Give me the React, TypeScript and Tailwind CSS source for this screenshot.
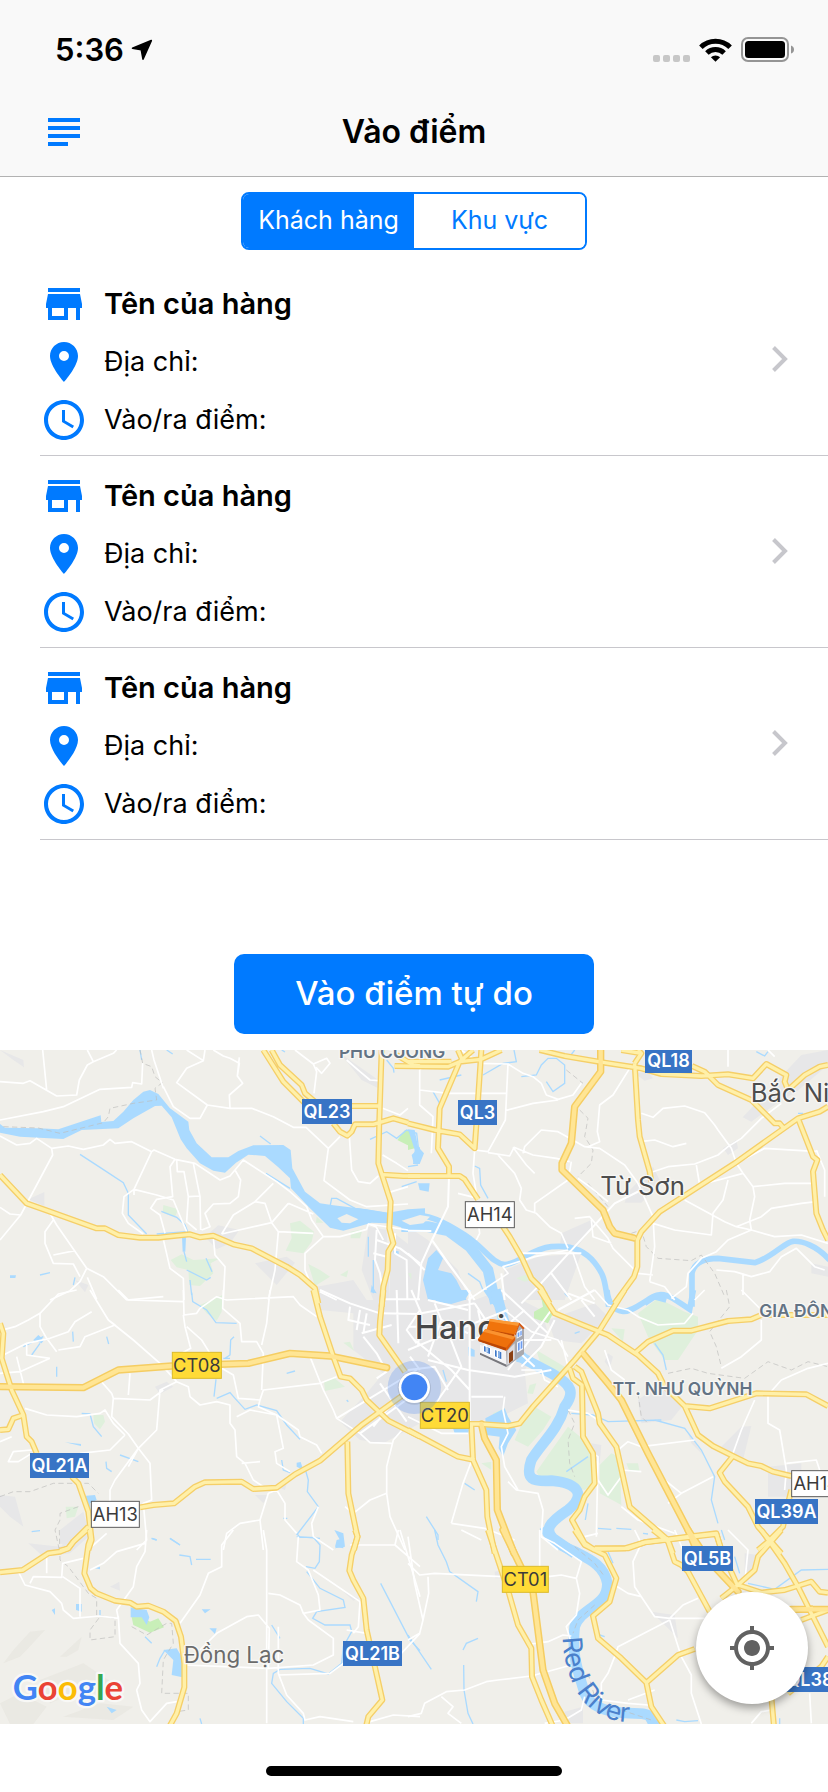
import { useState } from "react";
import { MdSubject, MdStore, MdLocationOn, MdAccessTime, MdMyLocation } from "react-icons/md";

/* ---------- Map data: six sheets, each with its own origin ---------- */

type Sheet = {
  x: number;
  y: number;
  urban?: string;
  green?: string;
  park?: string;
  lake?: string;
  river?: string;
  river2?: string;
  stream?: string;
  minor?: string;
  street?: string;
  border?: string;
  road?: string;
  highway?: string;
};

const SHEETS: Sheet[] = [
  {
    x: 0,
    y: 0,
    urban:
      "M85 478L133 456 133 498Z M0 30L70 60 72 82 40 60Z M615 590L655 556 718 570 690 610 650 628Z M765 670L860 650 885 668 830 735Z M1105 560L1160 570 1170 780 1120 780 1085 690Z M1170 570L1260 640 1260 780 1170 780Z M950 740L1060 720 1100 780 950 780Z M1020 40L1135 120 1135 145 1085 120Z M225 720L265 735 255 757Z",
    green:
      "M490 495L535 508 525 530 488 518Z M870 550L900 542 942 575 935 605 910 640 857 632 875 595Z M512 660L545 643 580 660 660 655 632 670 640 700 600 738 568 735 565 690 530 682Z M925 672L960 690 990 710 945 738Z M1052 575L1088 568 1080 595 1052 595Z M1020 705L1045 690 1040 712Z M950 530L970 548 948 548Z",
    park: "M1192 300L1215 270 1240 275 1254 325 1222 315Z",
    lake: "M0 252L15 263 115 265 175 268 302 226 304 246 340 243 370 215 400 180 430 155 450 150 475 162 510 205 565 245 568 270 590 310 635 352 685 352 715 333 760 316 850 315 872 330 877 385 915 455 960 490 1000 496 1100 508 1165 518 1224 508 1275 505 1275 548 1224 568 1160 550 1115 548 1030 572 990 563 930 505 873 445 870 415 835 382 795 348 745 344 708 368 675 398 640 392 600 370 560 325 542 298 515 232 485 197 465 198 400 235 355 265 245 270 190 297 60 290 0 278Z M1235 345L1260 320 1260 370 1240 365Z M1115 735L1130 760 1112 757Z M546 590L558 592 556 635 548 635Z M30 706L48 706 46 714 30 714Z M1180 632L1196 634 1196 648 1182 642Z",
    stream:
      "M240 343L300 382 370 428 385 460 385 525 440 582 M470 582L560 575 M484 514L530 532 555 555 565 580 M780 288L812 312 M798 400L870 445 M990 500L995 475 1010 475 1065 505 1160 520 M1110 298L1160 275 1190 295 1220 270 1250 280 1256 330 M1160 60L1180 85 1182 98 M1105 590L1105 650 M1120 660L1120 760 M552 635L560 665 M560 690L620 720 632 712 M618 655L636 695 M570 720L575 765 M120 705L150 698 M225 712L220 735 M420 30L425 60 M500 30L518 42 M1205 440L1250 425 M845 30L855 36",
    minor:
      "M0 125L70 130 90 122 170 168 230 165 238 120 262 75 280 65 M128 30L140 150 M280 65L262 30 M280 65L340 40 350 30 M0 240L130 215 190 200 300 148 395 142 398 128 425 132 428 70 M490 140L520 200 570 235 600 235 622 195 690 205 755 205 820 230 880 262 920 262 M455 30L462 60 490 145 M622 195L530 128 560 85 610 62 615 30 M610 62L560 30 M640 30L670 48 690 55 718 70 712 108 728 130 688 165 690 205 M718 52L712 108 M885 30L940 72 950 95 942 160 M940 72L980 55 990 70 965 100 948 82 M0 288L50 315 90 310 110 295 155 325 205 318 250 328 310 315 330 298 345 310 395 305 455 335 462 330 525 358 585 370 660 420 690 408 730 360 830 425 870 455 920 500 935 540 970 590 1020 590 1100 568 1105 552 1224 570 M155 325L158 345 62 525 0 600 M0 502L30 522 62 525 M455 335L402 448 402 465 M402 448L470 465 520 480 545 540 560 575 M402 448L372 470 367 520 385 550 430 582 M525 358L510 380 518 470 470 478 452 505 480 525 495 580 M530 358L532 395 552 395 565 470 600 468 M580 370L600 470 602 570 M565 470L560 545 590 570 M705 390L722 420 715 470 690 490 640 492 615 520 630 560 605 570 M665 582L700 525 765 485 820 430 M665 582L815 548 865 490 M765 485L795 490 815 548 835 575 940 580 M865 490L940 522 M835 575L825 690 805 780 M1105 552L1128 560 1150 600 M918 262L985 325 972 422 1050 480 1100 500 1224 492 M1048 290L1055 390 1075 425 1110 430 1135 408 M985 325L1020 290 M1148 345L1190 370 1224 392 M1165 458L1224 440 M1040 60L1080 95 1110 120 1135 122 M1148 205L1200 225 1224 205 M490 598L510 685 550 715 552 780 M640 592L645 645 675 680 670 780 M150 520L170 555 260 685 240 725 210 752 150 780 M160 540L135 575 135 610 160 670 220 672 240 710 M160 645L225 632 M260 685L310 710 380 780 M262 712L290 778 M970 590L915 640 915 690 935 740 M960 755L1010 780 M380 780L490 770",
    street: "M1130 570L1125 660 1140 700 1150 770 M1130 600L1200 625 1260 670 M1185 580L1185 640 1220 660 1222 780 M1120 640L1160 650",
    border: "M10 260L115 264 180 280 310 248 325 230 330 205 400 190 470 180 465 145 487 128 465 110 455 80 428 70 420 30",
    road: "M0 405L80 490 150 515 290 565 315 565 355 585 420 593 475 593 500 590 570 583 600 592 640 587 700 613 755 625 860 680 900 705 945 745 955 790 M790 30L850 125 915 190 M815 30L840 75 905 135 915 160 960 198 1140 198 M1000 250L1020 275 1042 287 1055 275 1065 253 1120 253 1180 235 1224 248 M1145 30L1138 240 1135 370 1172 485 1168 565 1180 610 1165 635 1163 690 1150 740 1145 800 M1150 404L1210 408 1260 408 M1190 45L1240 75 1260 78",
  },
  {
    x: 1224,
    y: 0,
    urban:
      "M1004 232L1180 45 1260 30 1260 75 1160 160 1120 180 1030 245Z M945 325L985 300 990 325 960 345Z M660 455L735 380 760 430 700 488 650 488Z M460 580L550 540 560 555 500 630 455 625Z M290 690L390 650 520 640 470 780 280 780Z M0 560L60 600 150 690 180 780 0 780Z M1210 670L1260 680 1260 710 1210 700Z M680 100L720 95 735 115 710 122Z",
    green: "M325 715L350 705 390 715 350 725Z M0 700L10 700 10 720Z",
    park: "M0 270L10 272 20 325 0 330Z M400 740L420 760 400 780Z",
    lake: "M60 655L85 630 105 655 90 690 130 700 145 720 175 780 60 780 45 720Z M30 430L65 430 62 455 35 450Z M0 268L20 270 30 320 48 340 35 372 15 372 20 330Z",
    river: "M-8 524C60 520 110 546 170 585S250 668 290 674C330 672 370 626 430 620S530 630 560 668S590 720 602 800 M710 790L740 770 775 780 M852 800L852 700C858 668 890 655 930 655L1040 668C1090 655 1130 606 1155 604S1225 615 1265 660",
    river2: "M-20 560L60 560 120 572 185 620 240 690 262 790",
    stream:
      "M75 155L95 190 M95 120L160 105 M225 105L285 70 325 65 318 30 M340 110L385 105 400 75 420 55 445 55 470 75 470 130 435 155 415 125 M200 378L215 385 218 435 240 475 M180 700L215 725 225 750 M1045 35L1070 48 1080 35 M500 30L485 50 M0 380L30 375 M1170 220L1185 220",
    minor:
      "M160 30L215 70 300 72 345 100 375 110 400 130 415 165 450 178 495 165 520 130 M300 72L292 240 265 290 240 335 200 330 M292 212L375 190 450 180 M35 150L120 160 295 160 M35 90L35 195 75 230 70 340 M60 30L55 70 35 90 M665 85L615 165 575 195 568 275 575 305 540 320 M700 220L735 232 765 205 830 198 890 218 920 255 930 270 970 325 M240 338L305 348 318 322 375 345 445 355 485 365 M315 322L355 375 380 400 M345 340L350 320 400 270 450 275 485 295 530 320 575 325 650 375 690 430 735 530 740 620 725 725 M270 345L320 400 340 445 335 480 355 510 385 520 425 560 460 580 480 625 M480 420L380 490 380 520 M490 365L485 395 M510 415L545 440 600 485 M150 460L210 475 M200 330L195 400 205 460 M205 500L215 580 205 600 M970 325L985 370 1005 400 1035 440 1040 470 1025 540 1030 570 1100 590 1180 585 1260 610 M985 370L1070 325 1230 335 M1035 440L1130 430 1215 430 M960 420L945 480 915 520 910 585 800 570 735 550 M865 375L875 435 1005 400 M830 480L950 545 985 560 1030 570 960 600 925 635 880 655 840 700 835 740 790 775 M985 560L1060 530 1090 505 1180 490 1225 485 M735 395L780 380 860 372 930 345 960 320 1000 295 1060 235 1120 190 M695 305L740 300 795 320 835 310 M500 535L545 530 600 595 615 625 690 700 M550 540L555 590 610 610 M495 640L530 740 560 780 M690 700L735 705 M925 690L980 695 1030 710 1085 695 1120 650 1165 625 1220 680 1250 690 M1005 700L1005 765 M725 725L770 740 800 780 M1225 330L1250 390 1250 470 M180 780L300 700 285 680 380 650 480 630 M1080 30L1100 50 M960 30L960 80",
    street:
      "M0 572L70 573 M72 600L120 500 123 410 M72 600L40 670 30 780 M72 600L120 670 180 750 M0 640L50 690 M500 620L390 740 340 790 M500 620L620 490 700 450 M72 600L200 780 M340 640L520 640 M280 700L290 780 M430 700L490 780",
    border: "M475 90L525 130 M515 210L540 235 530 290 555 330 550 370 510 410 M540 430L600 500 M670 580L700 570 715 620 750 655 850 662 880 645 920 700 950 770",
    road: "M-40 78L120 80 155 65 220 58 280 30 M0 65L130 65 M195 30L155 65 95 205 90 325 123 380 123 410 M220 30L205 255 200 325 155 283 80 270 0 250 M150 30L165 65 M0 408L155 408 170 418 210 478 M285 560L305 590 340 650 370 715 400 745 425 790 M395 30L470 48 590 68 700 85 760 102 880 108 960 103 1035 115 1075 72 1135 105 1130 125 1140 150 M1140 150L1190 105 1235 80 1260 75 M852 78L890 95 930 135 1030 180 1080 230 1100 250 1115 250 1125 262 M690 30L700 40 680 70 M640 30L700 40 M680 70L690 240 695 290 725 395 730 425 M1260 200L1235 215 1170 235 980 370 755 515 700 575 688 600 688 680 678 710 620 790 M1170 235L1215 350 1228 360 1215 395 1225 520 1245 570 1260 600",
    highway: "M578 30L578 95 500 200 490 310 462 370 462 390 585 510 605 560 620 580 678 594",
  },
  {
    x: 0,
    y: 750,
    urban:
      "M960 30L1260 30 1260 400 1150 460 1080 450 1020 395 1100 310 1150 250 1060 180 1060 70 960 60Z M465 290L500 275 520 290 480 312Z M180 760L180 720 250 665 265 720 220 780Z M765 615L805 615 790 640Z M0 615L45 620 70 710 30 680 0 650Z M830 590L860 580 855 600Z",
    green:
      "M600 45L668 15 665 65 650 92 620 70Z M280 375L310 375 315 395 300 418 282 400Z M197 650L235 650 225 680 200 685Z M972 275L1000 262 1035 290 975 303Z M1030 158L1050 155 1062 182Z",
    lake: "M100 150L115 135 132 150 125 160 Z M250 618L285 615 290 630 270 640 272 670Z M890 518L902 516 910 540 890 530Z M1010 750L1030 745 1030 775 1005 770Z M195 457L243 462 243 468Z",
    stream:
      "M575 8L578 35 620 60 648 98 710 100 M70 170L130 140 M95 195L120 160 M218 125L220 155 M170 230L170 260 M702 140L692 150 690 195 675 205 M670 205L690 205 M648 268L642 320 M650 325L690 308 705 325 735 358 770 345 830 362 860 405 900 448 M860 250L885 243 M245 370L270 372 280 410 305 440 M318 515L320 535 335 545 M360 495L415 515 M845 510L850 540 870 548 M915 535L925 570 922 605 955 650 890 735 M890 740L960 745 M455 745L470 750 M510 745L540 765 M850 685L862 685 M95 725L120 722 M320 140L326 162 M1040 330L1045 335",
    minor:
      "M0 122L45 110 85 90 120 70 175 12 230 0 M120 70L120 110 140 145 170 185 M0 200L80 160 150 145 205 125 225 95 275 65 M80 160L80 195 150 205 M270 0L325 90 400 150 480 220 530 275 M325 90L345 105 255 140 240 170 175 180 M50 200L75 300 M0 250L60 245 150 205 M550 0L552 75 590 70 600 55 650 20 680 30 880 20 900 45 950 80 M550 75L555 110 572 175 545 190 M560 110L605 150 630 190 M355 0L385 30 550 35 M670 0L668 55 720 100 725 155 770 155 790 190 785 300 M810 0L800 100 785 165 M530 275L565 290 570 320 600 345 650 335 690 345 690 400 705 420 710 500 735 520 760 570 805 600 M530 275L480 300 470 420 415 475 450 520 455 630 430 640 440 750 410 780 M490 300L450 330 340 325 335 310 300 270 M340 325L335 380 385 432 415 475 M75 355L140 375 230 380 300 370 315 360 340 400 375 435 M375 435L330 480 240 490 M385 315L390 250 M415 475L345 570 330 600 330 640 M385 530L415 475 M0 455L35 440 M95 480L40 485 25 515 55 515 95 490 M665 235L700 255 715 325 780 330 790 300 960 280 1010 260 M780 330L775 350 830 375 895 420 900 440 950 465 965 490 M710 380L750 360 830 375 850 475 825 485 830 520 870 545 M725 520L780 515 M930 200L970 300 1000 360 1010 385 1080 430 1110 458 1175 460 M1215 410L1180 450 1160 530 1160 610 1170 680 1215 780 M1160 610L1110 630 1060 670 M1060 670L1035 650 M805 610L830 600 855 640 855 690 890 730 M805 610L780 690 720 700 680 730 670 780 M780 690L790 780 M955 650L935 700 940 740 1000 780",
    street:
      "M960 0L1050 40 1140 70 1260 72 M1155 28L1260 28 M1190 0L1195 160 M1050 50L1045 90 1110 105 M1080 60L1070 120 M1100 70L1090 130 M1010 385L1250 240 M1080 430L1260 300 M1090 140L1130 190 1160 245 1130 265 M1140 280L1220 395 M1200 310L1120 410 M1260 60L1220 120 1250 160 M1085 130L1175 105 M1230 200L1260 240",
    border: "M0 620L40 605 90 605 160 580 265 580 295 610 M235 650L180 670 180 690 165 720 178 780",
    road: "M0 100L10 130 5 205 35 300 70 375 80 440 95 455 110 490 M0 420L25 418 40 385 70 375 M215 560L235 580 265 665 275 750 265 780 M265 710L220 755 205 775 180 782 M420 652L460 645 522 640 585 590 615 577 725 575 760 597 830 593 885 553 960 512 1085 405 1140 365 1205 318 M940 0L960 80 1000 200 1022 260 1050 265 1085 300 1100 330 1165 392 1260 440 M1150 0L1140 95 1138 135 1215 245 M1042 455L1045 610 1072 740 1062 780",
    highway: "M0 290L250 293 355 240 515 228 745 220 870 190 990 198 1160 233",
  },
  {
    x: 1224,
    y: 750,
    urban:
      "M0 30L200 30 280 0 400 60 420 130 350 240 360 340 280 380 180 400 0 400Z M420 90L560 40 600 80 520 160 440 150Z M690 330L770 270 830 340 790 390 700 400Z M940 470L1000 410 1030 408 1005 510 960 480Z M600 190L615 200 605 235 590 215Z M1080 530L1180 520 1180 620 1080 620Z M550 460L580 465 575 520 550 500Z M840 430L890 500 900 510 850 460Z",
    green:
      "M385 180L470 230 470 270 400 230Z M355 370L380 350 430 380 405 420 360 470 320 450Z M480 410L540 460 555 510 560 580 530 600 400 570 385 545Z M575 525L610 490 635 500 640 645 575 610Z M690 70L750 25 830 65 870 80 870 120 810 210 770 210 720 140Z M365 285L385 280 375 312 358 310Z M610 115L650 118 645 155Z M655 520L690 520 695 545 665 545Z M255 370L290 355 300 390 260 395Z M220 520L250 515 250 540Z",
    park: "M378 65L405 50 400 25 420 35 435 70 420 100 378 85Z M232 412L270 415 270 435 235 435Z",
    lake: "M62 0L190 0 170 30 130 42 85 35Z M225 0L250 0 290 50 290 85 260 50Z M232 385L290 355 300 380 325 420 300 460 285 500 272 475 275 440 235 435Z M180 170L200 180 200 200 182 198Z M135 415L185 418 180 430 140 430Z M320 185L355 195 370 225 325 215Z",
    river: "M597 0C600 40 620 62 645 64S700 40 735 20S800 30 845 58L856 0",
    river2:
      "M262 0L285 85 315 180 350 208 430 250C495 285 500 310 470 350C450 420 400 460 370 510C350 570 375 575 430 572C520 580 530 620 480 660C420 700 410 720 435 745L500 790",
    stream:
      "M740 160L765 195 775 240 M740 390L830 415 880 480 920 560 910 630 930 700 M475 545L540 500 M490 370L555 375 600 395 760 390 M540 640L532 690 M570 715L610 718 M625 715L670 718 M55 680L90 735 90 750 M170 580L200 600 M500 130L515 125 M470 10L480 20 M105 240L115 275",
    minor:
      "M560 0L600 45 660 60 690 80 750 105 830 100 855 70 M890 0L860 30 M290 60L370 125 450 150 480 200 M130 700L165 580 190 515 M130 700L230 715 320 750 M290 320L285 360 300 430 280 470 290 530 330 600 M300 575L325 600 390 610 405 660 400 740 450 780 M460 150L480 230 M590 180L610 240 650 270 M640 0L600 80 M700 470L660 455 630 480 M700 470L860 450 M700 470L770 570 820 610 915 560 M820 610L780 640 M1040 330L1000 420 975 490 M1080 315L1080 400 1115 420 1135 540 1130 600 M1120 270L1080 315 M1060 90L1060 150 1000 200 940 235 M1120 270L1200 235 1260 220 M1135 520L1225 510 1235 540 M555 490L570 500 565 740 M570 570L600 615 640 560 M640 650L690 690 800 730 M640 540L700 545 M480 360L540 370 570 390 M1000 0L1060 60 M340 240L400 240 410 270 450 290 M0 380L100 430 180 430",
    street:
      "M10 0L40 70 30 170 M80 40L100 90 60 200 M40 70L200 40 M200 40L240 100 380 230 M0 180L120 130 300 60 M60 210L180 240 320 260 430 240 M185 0L185 400 M125 140L160 230 90 330 40 380 M190 320L285 320 M20 150L130 240 185 300 M290 80L330 150 430 150 M300 240L430 60 M280 0L420 130 M210 60L240 200 M350 60L280 120 190 150 M100 90L180 130 M0 240L80 230 120 300 M0 110L70 110 M60 30L180 60 M340 230L400 170 440 90 M520 30L560 80 M450 60L560 0 M560 40L480 10",
    border: "M955 0L965 50 905 125 925 170 940 230 M780 250L850 235 900 250 1010 265 1080 215 1150 240 1200 215 1260 230 M480 360L500 400 480 450 485 520 500 560 M690 310L700 380 720 400",
    road: "M395 0L440 70 525 105 600 135 690 195 750 250 770 290 830 348 905 355 1045 310 1195 313 1260 348 M680 190L720 155 795 122 850 122 960 93 1030 88 1060 75 1260 75 M650 0L575 120 500 210 375 350 335 400 300 408 215 402 185 402 M485 235L495 265 522 285 525 440 555 490 560 580 530 620 515 660 492 690 530 760 560 780 M500 230L520 245 570 370 575 400 625 470 665 650 780 750 795 790 M0 420L150 500 200 510 M190 402L195 510 235 600 238 680 260 790 M560 775L650 775 710 757 840 740 925 730 940 780 M830 348L870 435 915 468 975 498 1020 520 1060 528 1095 545 1150 558 M975 498L935 548 950 575 1020 650 1050 710 1120 790 M1150 600L1140 640 1125 710 1080 755 1050 780",
    highway: "M525 190L600 280 640 330 720 490 840 720 870 790 M220 402L230 445 265 510 268 660 318 790",
  },
  {
    x: 0,
    y: 1470,
    urban: "M85 40L180 50 255 0 265 20 210 70 130 80Z M1030 185L1075 205 1060 212Z M330 170L358 155 360 182Z",
    park: "M395 262L410 248 450 275 475 265 492 292 450 308 400 285Z",
    lake: "M392 232L440 240 448 262 440 285 425 262 392 262Z M490 360L530 355 545 380 547 442 515 435 520 390Z M228 222L245 222 245 245 228 240Z M605 238L632 238 615 250Z M628 295L650 295 645 312Z M1003 0L1030 10 1035 50 1005 55 1020 30Z M320 530L350 540 335 550Z M155 240L165 235 165 255Z M285 115L300 110 300 118Z",
    stream:
      "M510 25L540 45 M538 75L570 80 575 105 M588 88L632 88 M890 10L900 22 940 22 960 45 958 95 945 115 918 110 M920 125L960 175 1030 210 1035 232 950 245 938 265 975 285 1050 285 1055 305 1030 350 1025 400 985 432 930 415 840 418 820 430 815 460 860 515 910 565 910 582 M815 285L840 325 M1142 160L1230 330 1260 362 M435 320L455 340 M300 240L300 260 M600 565L605 582 M470 410L480 385 495 360 M455 25L470 30",
    minor:
      "M440 0L435 65 410 110 400 170 350 240 355 265 300 258 220 265 190 240 185 220 150 185 75 165 55 125 M90 160L100 140 185 142 188 100 250 85 M188 140L240 175 240 260 M140 80L140 130 M270 120L310 100 350 65 435 40 M355 260L360 340 415 400 420 460 410 480 425 540 450 575 500 520 530 515 M275 50L320 10 M700 0L665 45 665 110 625 130 600 195 540 280 M790 0L800 60 800 580 M805 190L840 195 900 225 910 250 960 240 955 195 925 120 890 95 895 20 M600 360L650 310 740 260 775 255 808 295 805 415 M910 250L925 270 1000 325 1000 375 940 405 805 415 555 405 M835 290L835 430 860 495 910 550 915 570 960 560 1060 575 M835 435L990 430 1030 400 M940 120L1080 215 1075 290 1060 310 M1200 0L1230 100 1260 200 M1185 45L1260 110 M1195 0L1185 45 1050 45 M1100 310L1040 300 M1110 575L1180 555 1260 560 M1195 380L1260 310",
    border:
      "M178 0L180 90 205 110 265 190 290 205 290 255 345 265 345 320 270 330 270 300 300 260 M395 290L440 315 500 280 515 280 520 340 490 390 485 490 565 490 565 540 530 545",
    road: "M0 127L68 120 145 70 180 65 205 55 220 35 260 0 M268 0L272 25 265 45 253 130 272 175 290 190 345 212 390 218 410 230 445 227 490 245 527 273 543 320 553 400 553 472 530 550 508 590 M1065 0L1073 20 1055 75 1048 122 1060 150 1090 205 1100 300 1128 425 1147 510 1105 560 1098 590",
  },
  {
    x: 1224,
    y: 1470,
    urban: "M730 245L800 255 810 325 780 295Z M1010 70L1050 75 1045 130 1010 160Z M260 125L285 120 285 145 262 145Z M470 545L525 530 525 580 470 580Z",
    river2: "M410 -10C430 40 470 50 510 70S590 110 598 160C600 230 520 230 500 290C490 380 510 420 530 490C550 540 620 550 680 550S720 565 745 590",
    stream:
      "M80 0L90 45 115 95 125 125 210 185 205 215 M0 315L70 418 M165 360L175 340 210 325 M167 405L168 480 180 550 195 582 M805 570L830 575 870 572 M1020 160L1100 178 1180 120 1260 118 M980 80L995 130 M1115 565L1115 582 M600 65L615 100 M705 10L720 12 M575 315L590 320 M940 0L950 30",
    minor:
      "M0 100L35 135 80 130 280 140 M60 140L62 190 45 270 35 310 0 330 M0 20L20 160 45 270 M420 140L460 135 505 145 520 95 440 40 400 20 M395 0L395 130 M505 145L515 190 505 255 475 290 490 340 M370 342L420 335 465 315 490 318 M370 438L270 450 235 455 170 480 115 485 50 520 40 550 0 560 M100 500L135 530 120 550 160 580 M370 438L490 405 M620 165L660 190 700 200 740 260 785 265 890 265 M785 270L820 380 850 435 850 490 880 582 M785 270L630 350 620 380 600 430 580 460 580 510 660 520 720 525 M740 480L660 510 M785 265L825 225 870 205 M680 0L700 40 675 95 680 170 700 200 M800 0L825 60 M530 20L570 10 M960 0L1020 60 1010 160 M1100 25L1040 90 M1030 580L1060 545 1090 540 M1205 490L1210 580 M160 0L220 30 M410 580L470 570 520 540 530 500",
    border: "M500 50L560 100 590 140 M560 225L510 270 495 310 M540 430L560 500 M640 540L730 570",
    road: "M240 0L265 75 300 180 330 285 370 355 372 440 400 510 435 590 M500 0L530 45 590 75 625 145 605 215 555 258 570 325 640 385 715 458 730 530 770 590 M560 58L660 55 710 37 925 12 940 60 990 170 M715 458L810 375 860 357 M735 0L780 35 800 95 820 105 840 125 905 245 M1060 0L1130 100 1170 170 1220 270 1260 350 M1120 0L1050 80 1040 120 990 165 940 205 M990 165L1060 188 1130 180 1210 155 1235 185 1260 188 M1150 240L1215 235 M1180 270L1260 240 M1090 500L1098 590 M1140 490L1240 410 1260 380",
    highway: "M285 0L375 185 405 420 440 520 480 590 M840 0L900 90 990 185 M1150 238L1260 238",
  },
];

type ShieldKind = "national" | "express" | "asian";

const SHIELDS: { text: string; x: number; y: number; w: number; kind: ShieldKind }[] = [
  { text: "QL23", x: 906, y: 177, w: 150, kind: "national" },
  { text: "QL3", x: 1374, y: 180, w: 117, kind: "national" },
  { text: "QL18", x: 1935, y: 24, w: 141, kind: "national" },
  { text: "AH14", x: 1396, y: 485, w: 147, kind: "asian" },
  { text: "CT08", x: 517, y: 937, w: 147, kind: "express" },
  { text: "CT20", x: 1261, y: 1087, w: 147, kind: "express" },
  { text: "QL21A", x: 90, y: 1239, w: 177, kind: "national" },
  { text: "AH13", x: 274, y: 1384, w: 144, kind: "asian" },
  { text: "AH14", x: 2375, y: 1292, w: 147, kind: "asian" },
  { text: "QL39A", x: 2265, y: 1377, w: 189, kind: "national" },
  { text: "QL5B", x: 2046, y: 1518, w: 153, kind: "national" },
  { text: "CT01", x: 1507, y: 1579, w: 138, kind: "express" },
  { text: "QL21B", x: 1029, y: 1803, w: 177, kind: "national" },
  { text: "QL38", x: 2355, y: 1881, w: 150, kind: "national" },
];

const SHIELD_FILL: Record<ShieldKind, string> = {
  national: "fill-[#3874c5]",
  express: "fill-[#ffdb37] stroke-[#dcbb2c]",
  asian: "fill-white stroke-[#5c5c5c]",
};

const PLACES = [
  { text: "PHÚ CƯƠNG", x: 1176, y: 54, cls: "fill-[#637384] text-[52px] font-semibold" },
  { text: "Bắc Ninh", x: 2252, y: 186, cls: "fill-[#4d4d4d] text-[77px]", start: true },
  { text: "Từ Sơn", x: 1928, y: 464, cls: "fill-[#4d4d4d] text-[77px]" },
  { text: "GIA ĐÔNG", x: 2278, y: 831, cls: "fill-[#637384] text-[52px] font-semibold", start: true },
  { text: "TT. NHƯ QUỲNH", x: 2048, y: 1064, cls: "fill-[#637384] text-[52px] font-semibold" },
  { text: "Hanoi", x: 1244, y: 897, cls: "fill-[#474747] text-[98px] font-medium", start: true },
  { text: "Đồng Lạc", x: 702, y: 1870, cls: "fill-[#6b6b6b] text-[67px]" },
];

function Layer({ pick, className }: { pick: keyof Omit<Sheet, "x" | "y">; className: string }) {
  return (
    <g className={className}>
      {SHEETS.map((s, i) =>
        s[pick] ? <path key={i} d={s[pick]} transform={`translate(${s.x} ${s.y})`} /> : null,
      )}
    </g>
  );
}

function House() {
  return (
    <g transform="translate(1224 750)">
      <path d="M216 170L294 205 294 231 216 192Z" fill="#c9c9cd" />
      <path d="M216 165L296 182 296 226 216 188Z" fill="#f4f4f6" />
      <path d="M216 188L296 224 296 231 216 194Z" fill="#77777c" />
      <path d="M294 180L322 150 322 135 335 100 348 115 348 192 296 231Z" fill="#a9a9ae" />
      <path d="M298 182L320 160 320 208 298 225Z" fill="#dcdce0" />
      <path d="M303 190L315 181 315 211 303 220Z" fill="#8b4013" />
      <path d="M326 126L342 116 342 137 326 146Z M327 157L345 147 345 178 327 188Z" fill="#eef4ff" />
      <path d="M329 129L334 126 334 139 329 142Z M337 124L341 122 341 135 337 137Z M330 160L335 157 335 179 330 183Z M338 155L343 152 343 174 338 178Z" fill="#6d9df0" />
      <path d="M226 165L250 174 250 196 226 186Z M258 176L282 186 282 212 258 202Z" fill="#fff" />
      <path
        d="M228 168L233 170 233 186 228 184Z M236 171L246 175 246 192 236 188Z M261 180L266 182 266 202 261 199Z M270 183L280 187 280 208 270 203Z"
        fill="#3f78c8"
      />
      <path d="M237 171L241 173 241 189 237 187Z M271 184L275 186 275 204 271 202Z" fill="#a8cdf6" />
      <path d="M236 118L246 87 336 99 318 137Z" fill="#f0740c" />
      <path d="M246 87L336 99 331 108 243 94Z" fill="#fb9a36" />
      <path d="M236 118L318 133 318 139 238 123Z" fill="#c34d06" />
      <path d="M318 138L334 98 350 115 345 118 334 106 323 135Z" fill="#d85a12" />
      <path d="M210 147L232 117 322 140 300 176 294 181 212 153Z" fill="#ee700b" />
      <path d="M232 117L322 140 316 149 226 125Z" fill="#fa9230" />
      <path d="M210 147L294 173 294 182 212 154Z" fill="#bb4605" />
      <path d="M294 173L322 140 322 150 296 182Z" fill="#dd5c0a" />
    </g>
  );
}

function MapView() {
  return (
    <svg
      viewBox="0 30 2484 2022"
      role="img"
      aria-label="Hanoi"
      className="block h-auto w-full font-['Inter','Noto_Sans',sans-serif]"
    >
      <rect y="30" width="2484" height="2022" className="fill-[#f0efea]" />
      <g className="fill-[#e6e4de]">
        <path d="M90 1775L135 1770 80 1830 60 1850 10 1870 40 1830Z M180 1850L245 1790 235 1830 200 1850Z M120 1920L250 1870 340 1930 330 1970 240 1950 150 1990Z M0 1990L60 1960 140 2000 100 2052 30 2052Z M190 2030L300 1990 400 2000 340 2040Z" opacity="0.6" />
      </g>
      <Layer pick="urban" className="fill-[#e7e7e8]" />
      <Layer pick="green" className="fill-[#dff0dc]" />
      <Layer pick="park" className="fill-[#c8efb8]" />
      <Layer pick="lake" className="fill-[#aadaff]" />
      <Layer pick="river" className="fill-none stroke-[#aadaff] stroke-[17px]" />
      <Layer pick="river2" className="fill-none stroke-[#aadaff] stroke-[32px]" />
      <Layer pick="stream" className="fill-none stroke-[#aadaff] stroke-[4px]" />
      <path d="M1012 535L1040 522 1075 538 1050 550 1025 548Z M1205 542L1260 525 1290 530 1270 550 1230 555Z" className="fill-[#f0efea]" />
      <Layer pick="border" className="fill-none stroke-[#bdbdbb] stroke-2 [stroke-dasharray:16_10]" />
      <Layer pick="minor" className="fill-none stroke-white stroke-[5px] [stroke-linejoin:round]" />
      <Layer pick="street" className="fill-none stroke-white stroke-[6px] [stroke-linejoin:round]" />
      <g className="[stroke-linejoin:round]">
        <Layer pick="road" className="fill-none stroke-[#f5cf68] stroke-[18px]" />
        <Layer pick="highway" className="fill-none stroke-[#f5cd62] stroke-[22px] [stroke-linecap:round]" />
        <Layer pick="road" className="fill-none stroke-[#fff0a9] stroke-[10px]" />
        <Layer pick="highway" className="fill-none stroke-[#ffe594] stroke-[13px] [stroke-linecap:round]" />
      </g>

      {PLACES.map((p) => (
        <text
          key={p.text}
          x={p.x}
          y={p.y}
          textAnchor={p.start ? "start" : "middle"}
          className={`${p.cls} stroke-[#f7f7f5] stroke-[8px] [paint-order:stroke] [stroke-linejoin:round]`}
        >
          {p.text}
        </text>
      ))}

      <path id="river-label" d="M1688 1792Q1690 1868 1718 1930Q1756 2012 1832 2038Q1870 2050 1960 2046" fill="none" />
      <text className="fill-[#4a80cb] text-[80px]">
        <textPath href="#river-label">Red River</textPath>
      </text>

      {SHIELDS.map((s) => (
        <g key={`${s.text}-${s.x}`}>
          <rect
            x={s.x}
            y={s.y}
            width={s.w}
            height={s.kind === "national" ? 75 : 78}
            strokeWidth={s.kind === "national" ? 0 : 3}
            className={SHIELD_FILL[s.kind]}
          />
          <text
            x={s.x + s.w / 2}
            y={s.y + (s.kind === "national" ? 57 : 59)}
            textAnchor="middle"
            className={
              s.kind === "national" ? "fill-white text-[54px] font-semibold" : "fill-[#3b3b3b] text-[55px]"
            }
          >
            {s.text}
          </text>
        </g>
      ))}

      <House />

      <circle cx="1243" cy="1042" r="80" className="fill-[#4285f4]/25" />
      <circle cx="1243" cy="1044" r="50" className="fill-black/10" />
      <circle cx="1243" cy="1042" r="47" className="fill-white" />
      <circle cx="1243" cy="1042" r="39" className="fill-[#4285f4]" />

      <text
        x="38"
        y="1979"
        className="stroke-[#f8f8f6] stroke-[14px] font-['Lato',sans-serif] text-[104px] font-bold [paint-order:stroke] [stroke-linejoin:round]"
      >
        <tspan fill="#4285f4">G</tspan>
        <tspan fill="#ea4335">o</tspan>
        <tspan fill="#fbbc05">o</tspan>
        <tspan fill="#4285f4">g</tspan>
        <tspan fill="#34a853">l</tspan>
        <tspan fill="#ea4335">e</tspan>
      </text>
    </svg>
  );
}

/* ---------- Status bar ---------- */

function StatusBar() {
  return (
    <div className="flex h-[88px] items-center justify-between pt-[11px] pr-[34px] pl-[55px]">
      <div className="flex items-center gap-[7px]">
        <span className="text-[31px] leading-none font-semibold">5:36</span>
        <svg viewBox="0 0 22 22" className="size-[22px]" aria-hidden="true">
          <path
            d="M20.3 1.6L1.5 9.2 10.3 10.8 12 20.2Z"
            fill="black"
            stroke="black"
            strokeWidth="1.6"
            strokeLinejoin="round"
          />
        </svg>
      </div>
      <div className="flex items-end gap-[9px]">
        <svg viewBox="0 0 37 7" className="h-[7px] w-[37px]" aria-hidden="true">
          {[0, 10, 20, 30].map((x) => (
            <rect key={x} x={x} width="7" height="7" rx="2" fill="#c7c7c7" />
          ))}
        </svg>
        <svg viewBox="0 0 33 24" className="h-6 w-[33px]" aria-hidden="true">
          <g fill="none" stroke="black" strokeWidth="5">
            <path d="M1.9 9.2A20.8 20.8 0 0 1 31.1 9.2" />
            <path d="M7.9 15A12.3 12.3 0 0 1 25.1 15" />
          </g>
          <path d="M11.9 19.2A6.8 6.8 0 0 1 21.1 19.2L16.5 23.8Z" fill="black" />
        </svg>
        <svg viewBox="0 0 53 25" className="h-[25px] w-[53px]" aria-hidden="true">
          <rect x="1" y="1" width="46" height="23" rx="6" fill="none" stroke="#959595" strokeWidth="2" />
          <rect x="4" y="4" width="40" height="17" rx="3.5" fill="black" />
          <path d="M50 8.5Q53 9.5 53 12.5T50 16.5Z" fill="#959595" />
        </svg>
      </div>
    </div>
  );
}

/* ---------- Screen ---------- */

const STORES = [
  { id: 1, name: "Tên của hàng" },
  { id: 2, name: "Tên của hàng" },
  { id: 3, name: "Tên của hàng" },
];

const TABS = ["Khách hàng", "Khu vực"];

export default function App() {
  const [tab, setTab] = useState(0);

  return (
    <div className="flex min-h-screen flex-col bg-white font-['Inter','Noto_Sans',sans-serif] text-black">
      <header className="border-b border-[#b2b2b2] bg-[#f9f9f9]">
        <StatusBar />
        <div className="grid h-[88px] grid-cols-[1fr_auto_1fr] items-center px-10">
          <button type="button" aria-label="Menu" className="justify-self-start text-[#007aff]">
            <MdSubject className="size-12" />
          </button>
          <h1 className="text-[32px] leading-10 font-semibold">Vào điểm</h1>
        </div>
      </header>

      <main className="flex flex-1 flex-col">
        <div className="mt-[15px] mb-[14px] grid w-[346px] grid-cols-2 self-center overflow-hidden rounded-lg border-2 border-[#007aff]">
          {TABS.map((label, i) => (
            <button
              key={label}
              type="button"
              aria-pressed={tab === i}
              onClick={() => setTab(i)}
              className={`h-[54px] text-[25px] font-normal ${
                tab === i ? "bg-[#007aff] text-white" : "bg-white text-[#007aff]"
              }`}
            >
              {label}
            </button>
          ))}
        </div>

        <ul className="pl-10">
          {STORES.map((store) => (
            <li key={store.id} className="border-b border-[#c8c7cc]">
              <a href="#store" className="flex items-center justify-between pt-[11px] pr-10 pb-[6px]">
                <div className="text-[27px]">
                  <div className="flex h-[58px] items-center gap-4">
                    <MdStore className="size-12 text-[#007aff]" />
                    <h2 className="text-[29px] font-semibold">{store.name}</h2>
                  </div>
                  <div className="flex h-[58px] items-center gap-4">
                    <MdLocationOn className="size-12 text-[#007aff]" />
                    <p>Địa chỉ:</p>
                  </div>
                  <div className="flex h-[58px] items-center gap-4">
                    <MdAccessTime className="size-12 text-[#007aff]" />
                    <p>Vào/ra điểm:</p>
                  </div>
                </div>
                <svg viewBox="0 0 16 26" className="mb-[6px] h-[26px] w-4" aria-hidden="true">
                  <path d="M1.5 1.5L13 13 1.5 24.5" fill="none" stroke="#c7c7cc" strokeWidth="4" />
                </svg>
              </a>
            </li>
          ))}
        </ul>

        <button
          type="button"
          className="mt-[114px] mb-4 h-20 w-[360px] self-center rounded-[10px] bg-[#007aff] text-[33px] font-medium text-white"
        >
          Vào điểm tự do
        </button>

        <div className="relative">
          <MapView />
          <button
            type="button"
            aria-label="My location"
            className="absolute right-5 bottom-5 flex size-28 items-center justify-center rounded-full bg-white text-[#616161] shadow-[0_4px_8px_rgba(0,0,0,0.35)]"
          >
            <MdMyLocation className="size-12" />
          </button>
        </div>
      </main>

      <footer className="flex h-[68px] items-end justify-center pb-4">
        <div className="h-[10px] w-[296px] rounded-full bg-black" />
      </footer>
    </div>
  );
}
